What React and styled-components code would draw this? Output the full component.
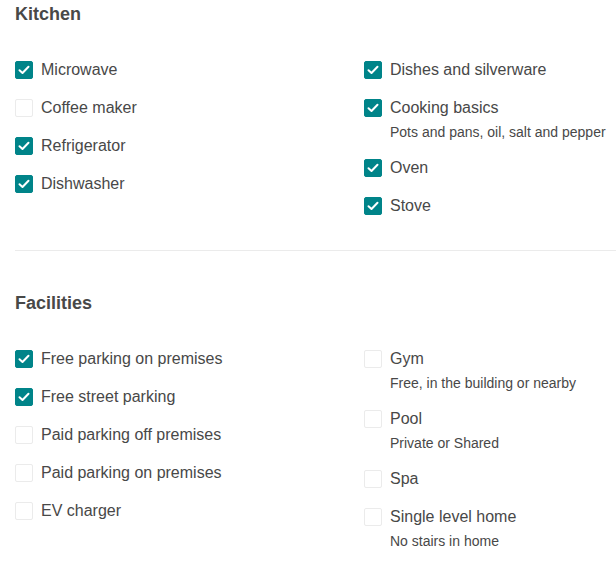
import React from "react"
import styled, { createGlobalStyle } from "styled-components"

const GlobalStyle = createGlobalStyle`
  body {
    margin: 0;
    background: #fff;
    font-family: "Liberation Sans", Arial, sans-serif;
    color: #484848;
  }
`

const Page = styled.div`
  padding: 0 0 0 15px;
  overflow: hidden;
`

const Section = styled.section`
  padding-bottom: 33px;
  & + & {
    border-top: 1px solid #ebebeb;
    padding-top: 38px;
  }
`

const Heading = styled.h2`
  margin: 0 0 31px;
  font-size: 18px;
  font-weight: 700;
  line-height: 28px;
  color: #484848;
`

const Columns = styled.div`
  display: grid;
  grid-template-columns: 349px 1fr;
`

const Column = styled.div`
  display: flex;
  flex-direction: column;
  gap: 16px;
`

const Item = styled.label`
  display: flex;
  align-items: flex-start;
  gap: 8px;
`

const Box = styled.span`
  flex: none;
  width: 18px;
  height: 18px;
  margin-top: 2px;
  box-sizing: border-box;
  border-radius: 2px;
  display: flex;
  align-items: center;
  justify-content: center;
  background: ${(p) => (p.$checked ? "#008489" : "#fff")};
  border: 1px solid ${(p) => (p.$checked ? "#008489" : "#ebebeb")};
`

const Text = styled.div`
  display: flex;
  flex-direction: column;
`

const Label = styled.span`
  font-size: 16px;
  line-height: 22px;
`

const Sub = styled.span`
  margin-top: 4px;
  font-size: 14px;
  line-height: 18px;
`

const Check = () => (
  <svg width="12" height="10" viewBox="0 0 12 10" fill="none">
    <path d="M1.5 5.2 L4.5 8 L10.5 1.8" stroke="#fff" strokeWidth="2" strokeLinecap="round" strokeLinejoin="round" />
  </svg>
)

const Amenity = ({ label, sub, checked }) => (
  <Item>
    <Box $checked={checked}>{checked && <Check />}</Box>
    <Text>
      <Label>{label}</Label>
      {sub && <Sub>{sub}</Sub>}
    </Text>
  </Item>
)

const sections = [
  {
    title: "Kitchen",
    left: [
      { label: "Microwave", checked: true },
      { label: "Coffee maker" },
      { label: "Refrigerator", checked: true },
      { label: "Dishwasher", checked: true },
    ],
    right: [
      { label: "Dishes and silverware", checked: true },
      { label: "Cooking basics", sub: "Pots and pans, oil, salt and pepper", checked: true },
      { label: "Oven", checked: true },
      { label: "Stove", checked: true },
    ],
  },
  {
    title: "Facilities",
    left: [
      { label: "Free parking on premises", checked: true },
      { label: "Free street parking", checked: true },
      { label: "Paid parking off premises" },
      { label: "Paid parking on premises" },
      { label: "EV charger" },
    ],
    right: [
      { label: "Gym", sub: "Free, in the building or nearby" },
      { label: "Pool", sub: "Private or Shared" },
      { label: "Spa" },
      { label: "Single level home", sub: "No stairs in home" },
    ],
  },
]

const App = () => (
  <Page>
    <GlobalStyle />
    {sections.map((s) => (
      <Section key={s.title}>
        <Heading>{s.title}</Heading>
        <Columns>
          <Column>
            {s.left.map((a) => (
              <Amenity key={a.label} {...a} />
            ))}
          </Column>
          <Column>
            {s.right.map((a) => (
              <Amenity key={a.label} {...a} />
            ))}
          </Column>
        </Columns>
      </Section>
    ))}
  </Page>
)

export default App
